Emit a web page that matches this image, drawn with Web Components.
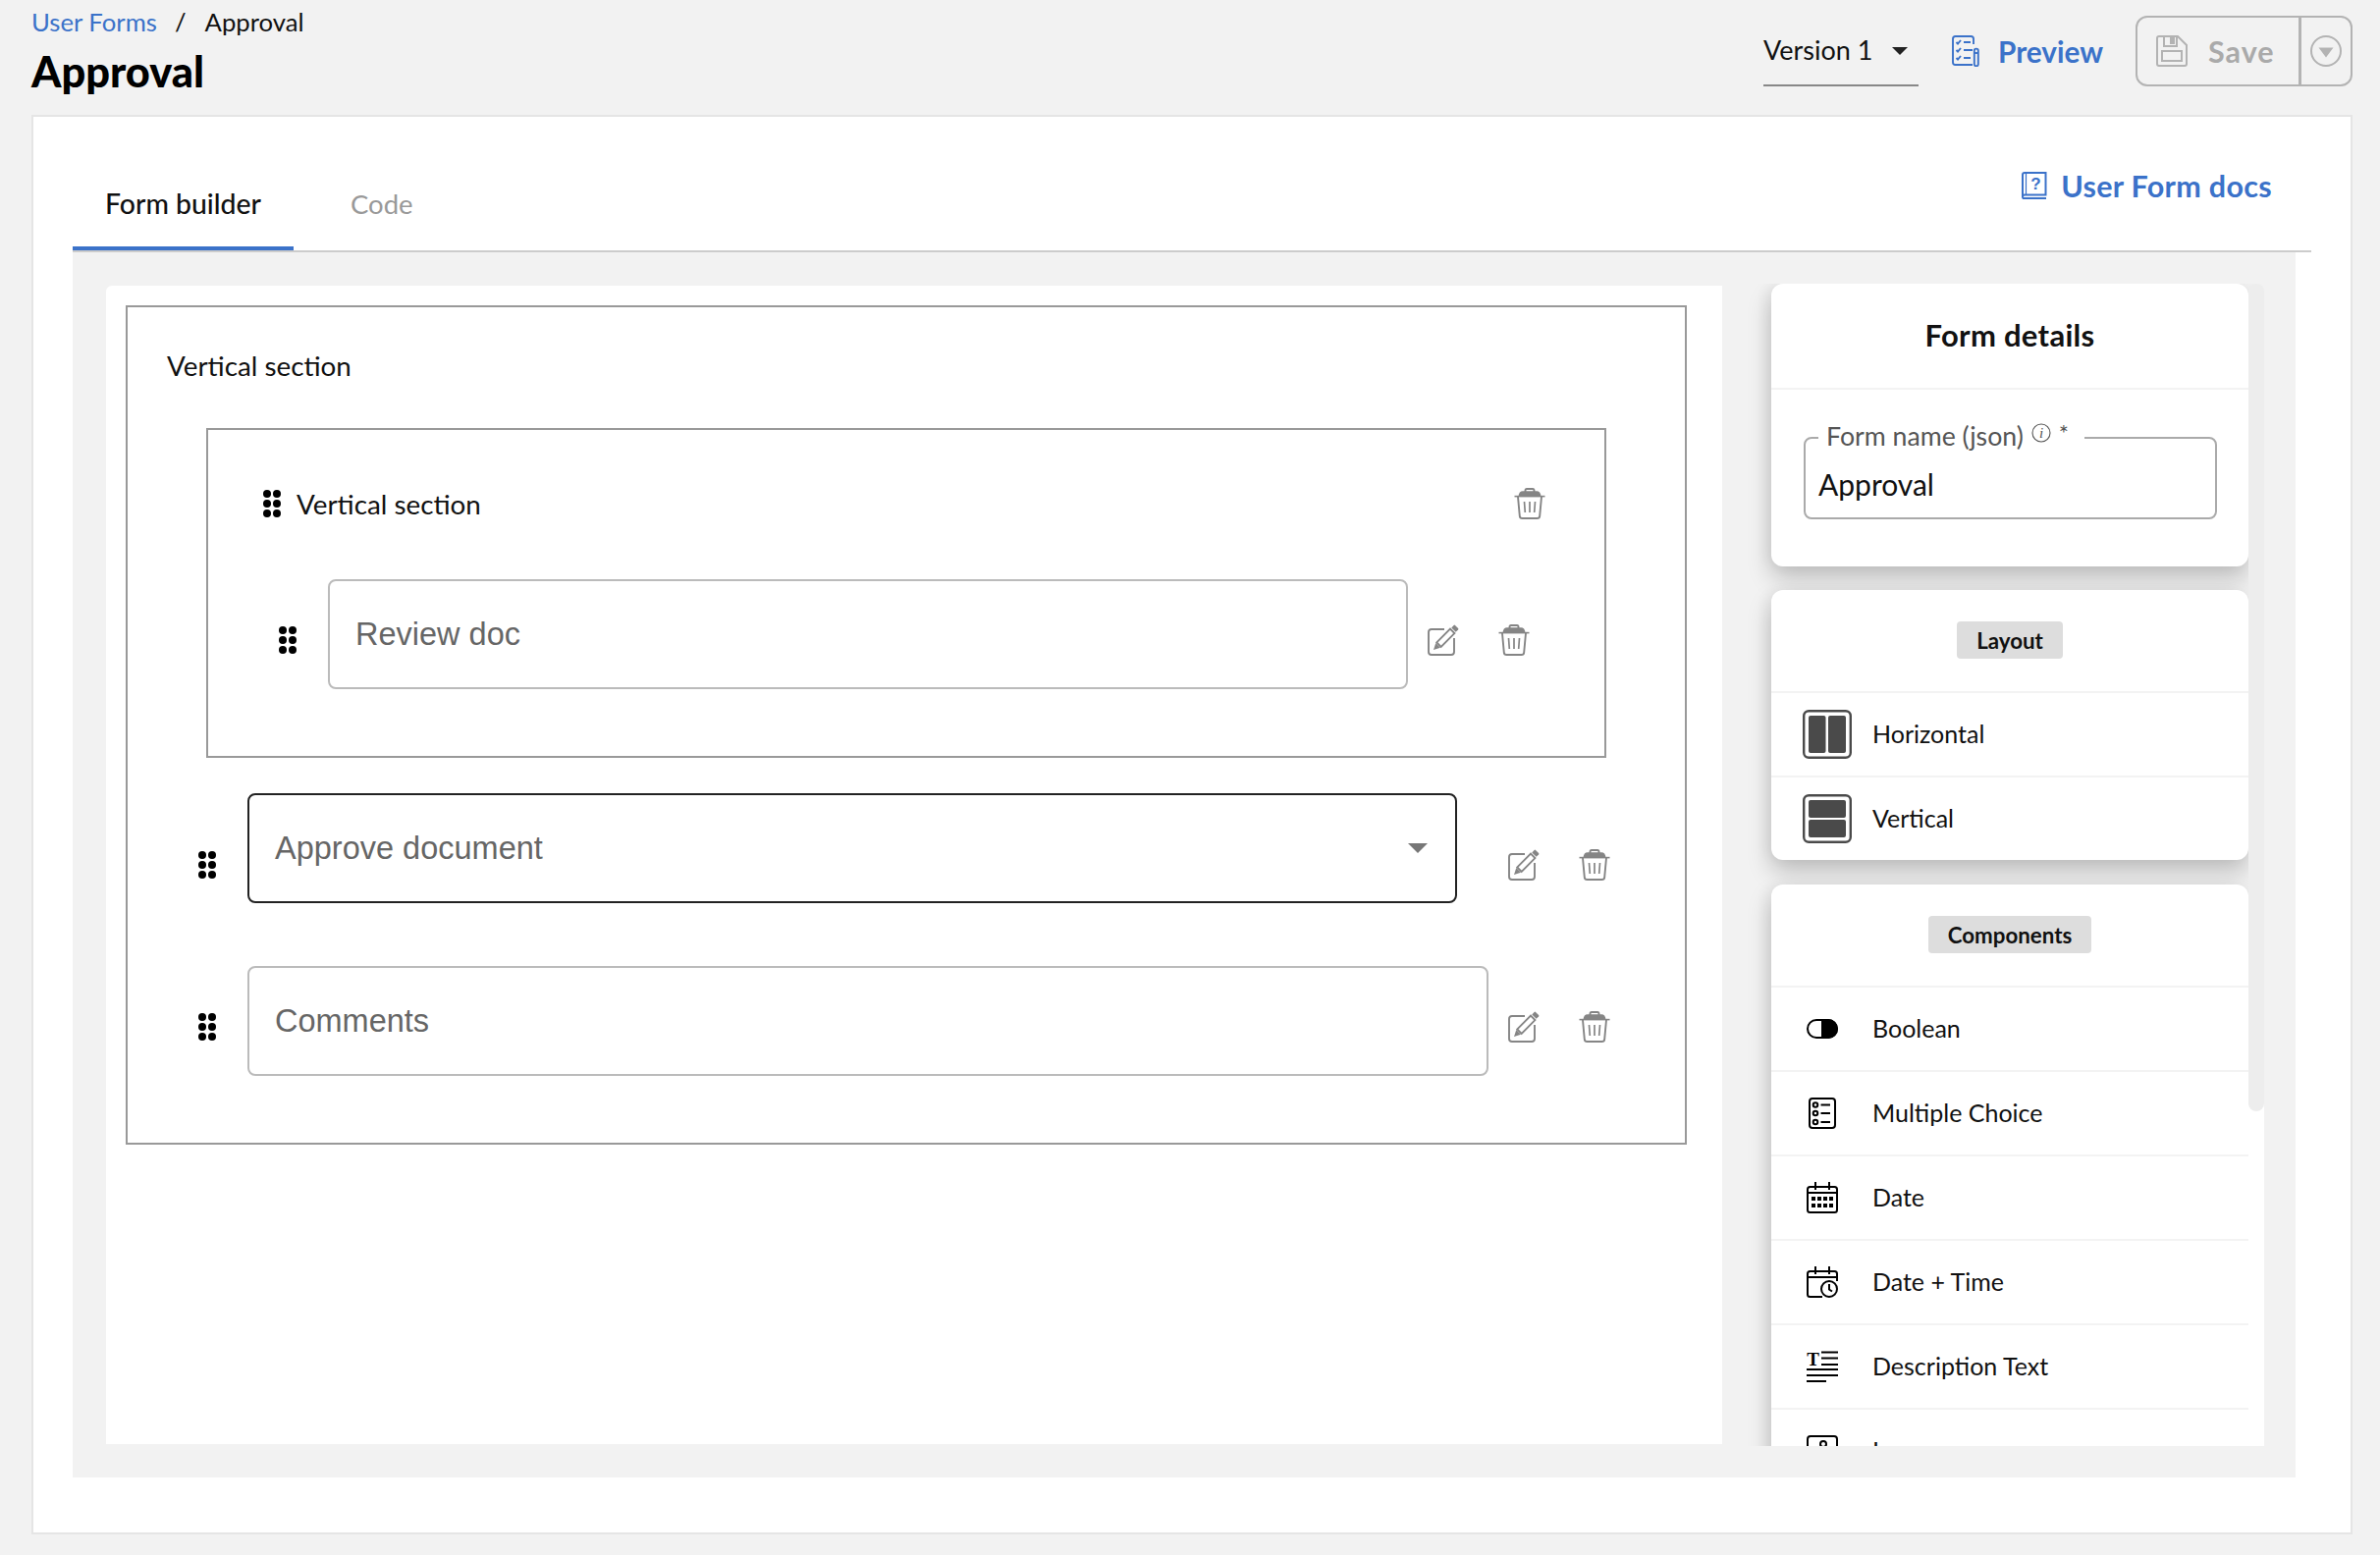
<!DOCTYPE html>
<html lang="en">
<head>
<meta charset="utf-8">
<title>Approval</title>
<style>
  html, body { margin: 0; padding: 0; }
  body {
    width: 2424px;
    height: 1584px;
    overflow: hidden;
    background: #f2f2f2;
    color: #000;
    font-family: Lato, "Open Sans", sans-serif;
  }
</style>
</head>
<body>
<form-page></form-page>

<script>
const ICONS = {
  drag: `<svg width="18" height="28" viewBox="0 0 18 28" fill="#000"><circle cx="4" cy="4" r="4"/><circle cx="14" cy="4" r="4"/><circle cx="4" cy="14" r="4"/><circle cx="14" cy="14" r="4"/><circle cx="4" cy="24" r="4"/><circle cx="14" cy="24" r="4"/></svg>`,
  trash: `<svg width="32" height="32" viewBox="0 0 32 32" fill="none" stroke="#858585" stroke-width="1.9"><path d="M11.5 4V2.6Q11.5 1 13 1H19Q20.500 1 20.500 2.6V4"/><path d="M4.500 8.500Q5 3.200 9 3.200H23Q27 3.200 27.500 8.500Z" fill="#858585" stroke="none"/><path d="M.5 8.600H31.500" stroke-width="1.6"/><path d="M4 9L5.800 28.600Q6 31 8.500 31H23.500Q26 31 26.200 28.600L28 9"/><path d="M10.500 14L11.300 25M16 14V25M21.500 14L20.700 25" stroke-width="1.7"/></svg>`,
  edit: `<svg width="32" height="32" viewBox="0 0 32 32" fill="none" stroke="#858585" stroke-width="1.9"><path d="M17 5H4Q1 5 1 8V28Q1 31 4 31H24Q27 31 27 28V14"/><path d="M6 26L8.300 19 13 23.700Z" fill="#858585" stroke="none"/><path d="M9.300 18.400L23 4.700 27.400 9.100 13.700 22.800Z"/><path d="M24.300 3.400L26.600.9Q27.300.3 28 .9L31.100 4Q31.700 4.700 31.100 5.400L28.700 7.800Z" fill="#858585" stroke="none"/></svg>`,
  preview: `<svg width="28" height="32" viewBox="0 0 28 32" fill="none" stroke="#3b72c9" stroke-width="1.9"><path d="M22 9V3.500Q22 1 19.500 1H3.500Q1 1 1 3.500V27.500Q1 30 3.500 30H21"/><path d="M4.500 7L6 8.600 9 5M4.500 15L6 16.600 9 13M4.500 23L6 24.600 9 21"/><path d="M12 7H19M12 15H21M12 23H19" stroke-width="2.2"/><path d="M22.800 15.500Q22.800 13.600 24.800 13.600T26.800 15.500V29.500Q26.800 31.300 24.800 31.300T22.800 29.500Z"/><path d="M22.800 18H26.800"/></svg>`,
  save: `<svg width="32" height="32" viewBox="0 0 32 32" fill="none" stroke="#b3b3b3" stroke-width="2"><path d="M1 3Q1 1 3 1H22L31 10V29Q31 31 29 31H3Q1 31 1 29Z"/><path d="M8 1V11H21V1"/><path d="M14 1H19V9H14Z" fill="#b3b3b3" stroke="none"/><path d="M6 16H26V26H6Z"/></svg>`,
  circleArrow: `<svg width="32" height="32" viewBox="0 0 32 32" fill="none" stroke="#b3b3b3" stroke-width="2"><circle cx="16" cy="16" r="15"/><path d="M8.500 12.500H23.500L16 22.500Z" fill="#b3b3b3" stroke="none"/></svg>`,
  docs: `<svg width="26" height="28" viewBox="0 0 26 28" fill="none" stroke="#3b72c9" stroke-width="2"><path d="M3 1H24.500V23.500H3Q1 23.500 1 25.500T3 27H25M1 25.500V3Q1 1 3 1"/><path d="M4.500 1V23" stroke-width="1.2"/><text x="14.500" y="18" text-anchor="middle" font-family="Liberation Sans" font-size="17" font-weight="700" fill="#3b72c9" stroke="none">?</text></svg>`,
  info: `<svg width="20" height="20" viewBox="0 0 20 20" fill="none" stroke="#555" stroke-width="1.1"><circle cx="10" cy="10" r="9"/><text x="10" y="15" text-anchor="middle" font-family="Liberation Serif" font-style="italic" font-size="15" fill="#555" stroke="none">i</text></svg>`,
  horizontal: `<svg width="50" height="50" viewBox="0 0 50 50" fill="#4a4a4a"><rect x="1.200" y="1.200" width="47.600" height="47.600" rx="5" fill="none" stroke="#4a4a4a" stroke-width="2.4"/><rect x="6" y="6" width="17.500" height="38" rx="2"/><rect x="26" y="6" width="18" height="38" rx="2"/></svg>`,
  vertical: `<svg width="50" height="50" viewBox="0 0 50 50" fill="#4a4a4a"><rect x="1.200" y="1.200" width="47.600" height="47.600" rx="5" fill="none" stroke="#4a4a4a" stroke-width="2.4"/><rect x="6" y="6" width="38" height="18" rx="2"/><rect x="6" y="26" width="38" height="18" rx="2"/></svg>`,
  boolean: `<svg width="32" height="20" viewBox="0 0 32 20" fill="none" stroke="#000" stroke-width="2"><rect x="1" y="1" width="30" height="18" rx="9"/><path d="M16 1H22A9 9 0 0 1 22 19H16Z" fill="#000"/></svg>`,
  choice: `<svg width="28" height="32" viewBox="0 0 28 32" fill="none" stroke="#000" stroke-width="2"><rect x="1" y="1" width="26" height="30" rx="3"/><circle cx="7" cy="7.500" r="2.300"/><circle cx="7" cy="16" r="2.300"/><circle cx="7" cy="25" r="2.300"/><path d="M12.500 7.500H22M12.500 16H22M12.500 25H22"/></svg>`,
  date: `<svg width="32" height="32" viewBox="0 0 32 32" fill="none" stroke="#000" stroke-width="2"><rect x="1" y="5" width="30" height="26" rx="2.500"/><path d="M1 11H31M9 0V8M23 0V8"/><g fill="#000" stroke="none"><rect x="5" y="15" width="4" height="4"/><rect x="11" y="15" width="4" height="4"/><rect x="17" y="15" width="4" height="4"/><rect x="23" y="15" width="4" height="4"/><rect x="5" y="22" width="4" height="4"/><rect x="11" y="22" width="4" height="4"/><rect x="17" y="22" width="4" height="4"/><rect x="23" y="22" width="4" height="4"/></g></svg>`,
  datetime: `<svg width="32" height="32" viewBox="0 0 32 32" fill="none" stroke="#000" stroke-width="2"><path d="M16 31H3.500Q1 31 1 28.500V7.500Q1 5 3.500 5H28.500Q31 5 31 7.500V15"/><path d="M1 11H31M9 0V8M23 0V8"/><circle cx="23" cy="23" r="8"/><path d="M23 18V23.500L26 25.500"/></svg>`,
  description: `<svg width="32" height="32" viewBox="0 0 32 32" fill="none" stroke="#000" stroke-width="2"><text x="6.500" y="15" text-anchor="middle" font-family="Liberation Serif" font-weight="700" font-size="19" fill="#000" stroke="none">T</text><path d="M15 1.500H32M15 7.500H32M15 14H32M0 19H32M0 25H32M0 31H20"/></svg>`,
  image: `<svg width="32" height="32" viewBox="0 0 32 32" fill="none" stroke="#000" stroke-width="2"><rect x="1" y="1" width="30" height="30" rx="3"/><circle cx="17" cy="9" r="3"/><path d="M5 26L12 17 18 23 22 19 27 26"/></svg>`
};

class FbIcon extends HTMLElement {
  constructor() {
    super();
    this.attachShadow({ mode: "open" });
  }
  connectedCallback() {
    this.shadowRoot.innerHTML = `
      <style>:host { display: inline-flex; flex: none; line-height: 0; } svg { display: block; }</style>
      ${ICONS[this.getAttribute("name")] || ""}`;
  }
}

class FormHeader extends HTMLElement {
  constructor() {
    super();
    this.attachShadow({ mode: "open" });
    this.shadowRoot.innerHTML = `
      <style>
        :host { display: flex; justify-content: space-between; height: 117px; padding: 0 28px 0 32px; box-sizing: border-box; }
        .crumbs { display: flex; height: 44px; align-items: center; font-size: 25.700px; color: #111; }
        .crumbs a { color: #3b72c9; }
        .crumbs i { font-style: normal; margin: 0 19px 0 18px; }
        h1 { margin: 2px 0 0; font-size: 43.400px; line-height: 52px; font-weight: 900; }
        .actions { display: flex; align-items: flex-start; padding-top: 16px; }
        .version { display: flex; align-items: center; width: 158px; height: 70px; padding-bottom: 2px; box-sizing: content-box; height: 68px; border-bottom: 2px solid #888; font-size: 27px; color: #111; }
        .version span { flex: 1; }
        .version b { width: 0; height: 0; margin: 3px 11px 0 0; border: 8px solid transparent; border-top-color: #222; border-bottom: 0; }
        .preview { display: flex; align-items: center; gap: 19px; height: 72px; margin: 0 33px 0 34px; color: #3b72c9; font-size: 29.700px; font-weight: 700; }
        .save { display: flex; width: 221px; height: 72px; box-sizing: border-box; border: 2px solid #b3b3b3; border-radius: 12px; color: #aaa; font-size: 30.500px; letter-spacing: 1px; font-weight: 700; }
        .save div { display: flex; align-items: center; }
        .main { width: 167px; gap: 21px; padding-left: 19px; box-sizing: border-box; border-right: 3px solid #b3b3b3; }
        .more { flex: 1; justify-content: center; }
      </style>
      <div>
        <div class="crumbs"><a>User Forms</a><i>/</i><span>Approval</span></div>
        <h1>Approval</h1>
      </div>
      <div class="actions">
        <div class="version"><span>Version 1</span><b></b></div>
        <div class="preview"><fb-icon name="preview"></fb-icon>Preview</div>
        <div class="save">
          <div class="main"><fb-icon name="save"></fb-icon>Save</div>
          <div class="more"><fb-icon name="circleArrow"></fb-icon></div>
        </div>
      </div>`;
  }
}

class FormTabs extends HTMLElement {
  constructor() {
    super();
    this.attachShadow({ mode: "open" });
    this.shadowRoot.innerHTML = `
      <style>
        :host { display: flex; height: 138px; margin: 0 40px; box-sizing: border-box; border-bottom: 2px solid #ccc; font-size: 27.500px; }
        .tab { align-self: flex-end; height: 92px; padding: 0 33px 4px; box-sizing: border-box; display: flex; align-items: center; color: #999; }
        .tab.on { color: #111; width: 225px; justify-content: center; padding: 0; border-bottom: 4px solid #3b72c9; margin-right: 25px; font-size: 28.400px; font-weight: 500; }
        .docs { margin: 50px 40px 0 auto; display: flex; align-items: center; gap: 14px; height: 40px; color: #3b72c9; font-size: 30.500px; letter-spacing: .3px; font-weight: 700; }
      </style>
      <div class="tab on">Form builder</div>
      <div class="tab">Code</div>
      <div class="docs"><fb-icon name="docs"></fb-icon>User Form docs</div>`;
  }
}

class FbSection extends HTMLElement {
  constructor() {
    super();
    this.attachShadow({ mode: "open" });
    this.shadowRoot.innerHTML = `
      <style>
        :host { display: block; box-sizing: border-box; border: 2px solid #999; font-size: 27.800px; color: #111; }
        .head { display: flex; align-items: center; }
        .head span { flex: 1; }
        :host([movable]) .head { height: 32px; margin: 59px 60px 61px 56px; gap: 16px; }
        :host(:not([movable])) .head { height: 40px; margin: 39px 0 44px 40px; }
        :host(:not([movable])) fb-icon { display: none; }
      </style>
      <div class="head"><fb-icon name="drag"></fb-icon><span><slot name="title"></slot></span><fb-icon name="trash"></fb-icon></div>
      <slot></slot>`;
  }
}

class FbRow extends HTMLElement {
  constructor() {
    super();
    this.attachShadow({ mode: "open" });
    this.shadowRoot.innerHTML = `
      <style>
        :host { display: flex; align-items: center; padding-left: 72px; font-family: "Liberation Sans", Arial, sans-serif; font-size: 32.500px; color: #666; }
        .box { display: flex; align-items: center; justify-content: space-between; flex: none; width: var(--w); height: 112px; margin: 0 var(--gap) 0 32px; padding: 0 40px 0 26px; box-sizing: border-box; border: 2px solid #bbb; border-radius: 8px; background: #fff; }
        :host([select]) .box { border-color: #222; border-width: 2.500px; }
        .caret { display: none; width: 0; height: 0; border: 10px solid transparent; border-top-color: #777; border-bottom: 0; margin-right: -11.500px; }
        :host([select]) .caret { display: block; }
        fb-icon { margin-top: var(--shift, 11px); }
        .trash { margin-left: 40px; }
      </style>
      <fb-icon name="drag"></fb-icon>
      <div class="box"><span><slot></slot></span><div class="caret"></div></div>
      <fb-icon name="edit"></fb-icon>
      <fb-icon class="trash" name="trash"></fb-icon>`;
  }
}

class FbPanel extends HTMLElement {
  constructor() {
    super();
    this.attachShadow({ mode: "open" });
    this.shadowRoot.innerHTML = `
      <style>
        :host { display: block; flex: none; border-radius: 12px; background: #fff; box-shadow: 0 12px 24px rgba(0,0,0,.22), -6px 0 12px rgba(0,0,0,.04); }
        .head { display: flex; justify-content: center; align-items: flex-start; height: 71px; padding-top: 32px; }
        :host([title-head]) .head { height: 106px; padding: 0 0 2px; align-items: center; box-sizing: border-box; font-size: 31px; letter-spacing: .3px; font-weight: 700; color: #111; }
        .chip { display: flex; align-items: center; height: 38px; padding: 0 20px; border-radius: 4px; background: #ddd; font-size: 22.300px; font-weight: 700; color: #111; }
        :host([title-head]) .chip { height: auto; padding: 0; background: none; font: inherit; }
      </style>
      <div class="head"><div class="chip"><slot name="title"></slot></div></div>
      <slot></slot>`;
  }
}

class FbPaletteItem extends HTMLElement {
  constructor() {
    super();
    this.attachShadow({ mode: "open" });
  }
  connectedCallback() {
    this.shadowRoot.innerHTML = `
      <style>
        :host { display: flex; align-items: center; height: 86px; box-sizing: border-box; padding: 0 0 2px 32px; border-top: 2px solid #f3f3f3; font-size: 25px; color: #111; }
        .ico { display: flex; justify-content: center; width: 32px; margin: 2px 35px 0 4px; flex: none; }
        :host([big]) .ico { width: 50px; margin: 2px 21px 0 0; }
      </style>
      <div class="ico"><fb-icon name="${this.getAttribute("icon")}"></fb-icon></div>
      <slot></slot>`;
  }
}

class FbTextInput extends HTMLElement {
  constructor() {
    super();
    this.attachShadow({ mode: "open" });
    this.shadowRoot.innerHTML = `
      <style>
        :host { display: block; position: relative; height: 84px; margin: 48px 32px 48px 33px; box-sizing: border-box; border: 2px solid #aaa; border-radius: 8px; font-size: 30px; color: #111; }
        .value { display: flex; align-items: center; height: 100%; padding: 11px 0 0 13px; box-sizing: border-box; }
        .legend { position: absolute; top: -19px; left: 13px; display: flex; align-items: flex-start; gap: 8px; height: 30px; padding: 0 16px 0 8px; background: #fff; font-size: 26.700px; color: #555; }
        .legend fb-icon { margin-top: 3px; }
        .legend small { font-size: 24px; line-height: 26px; }
      </style>
      <div class="legend">Form name (json) <fb-icon name="info"></fb-icon><small>*</small></div>
      <div class="value"><slot></slot></div>`;
  }
}

class FormPage extends HTMLElement {
  constructor() {
    super();
    this.attachShadow({ mode: "open" });
    this.shadowRoot.innerHTML = `
      <style>
        :host { display: block; }
        .card { width: 2364px; height: 1446px; margin-left: 32px; box-sizing: border-box; border: 2px solid #e5e5e5; background: #fff; }
        .work { display: flex; align-items: flex-start; width: 2264px; height: 1248px; margin-left: 40px; padding: 34px 0 34px 34px; box-sizing: border-box; background: #f2f2f2; }
        .canvas { flex: none; width: 1646px; height: 1180px; padding: 20px 0 0 20px; box-sizing: border-box; background: #fff; border-top-left-radius: 6px; }
        .outer { width: 1590px; height: 855px; }
        .inner { display: block; width: 1426px; height: 336px; margin: 0 0 36px 80px; }
        .tight { margin-top: 64px; }
        .side { display: flex; flex: none; width: 502px; height: 1184px; margin: -2px 0 0 50px; clip-path: inset(0 0 0 -40px); }
        .panels { display: flex; flex-direction: column; width: 486px; }
        .panels fb-panel + fb-panel { margin-top: 24px; }
        .panels fb-panel + fb-panel + fb-panel { margin-top: 25px; }
        .track { width: 16px; background: linear-gradient(transparent 100px, #fff 100px); }
        .thumb { height: 843px; background: #ededed; border-radius: 10px; }
      </style>
      <form-header></form-header>
      <div class="card">
        <form-tabs></form-tabs>
        <div class="work">
          <div class="canvas">
            <fb-section class="outer">
              <span slot="title">Vertical section</span>
              <fb-section class="inner" movable>
                <span slot="title">Vertical section</span>
                <fb-row style="--w:1100px;--gap:20px">Review doc</fb-row>
              </fb-section>
              <fb-row select style="--w:1232px;--gap:52px;--shift:33px">Approve document</fb-row>
              <fb-row class="tight" style="--w:1264px;--gap:20px">Comments</fb-row>
            </fb-section>
          </div>
          <div class="side">
            <div class="panels">
              <fb-panel title-head>
                <span slot="title">Form details</span>
                <div style="border-top:2px solid #f3f3f3;display:flow-root"><fb-text-input>Approval</fb-text-input></div>
              </fb-panel>
              <fb-panel>
                <span slot="title">Layout</span>
                <fb-palette-item big icon="horizontal">Horizontal</fb-palette-item>
                <fb-palette-item big icon="vertical">Vertical</fb-palette-item>
              </fb-panel>
              <fb-panel>
                <span slot="title">Components</span>
                <fb-palette-item icon="boolean">Boolean</fb-palette-item>
                <fb-palette-item icon="choice">Multiple Choice</fb-palette-item>
                <fb-palette-item icon="date">Date</fb-palette-item>
                <fb-palette-item icon="datetime">Date + Time</fb-palette-item>
                <fb-palette-item icon="description">Description Text</fb-palette-item>
                <fb-palette-item icon="image">Image</fb-palette-item>
              </fb-panel>
            </div>
            <div class="track"><div class="thumb"></div></div>
          </div>
        </div>
      </div>`;
  }
}

customElements.define("fb-icon", FbIcon);
customElements.define("form-header", FormHeader);
customElements.define("form-tabs", FormTabs);
customElements.define("fb-section", FbSection);
customElements.define("fb-row", FbRow);
customElements.define("fb-panel", FbPanel);
customElements.define("fb-palette-item", FbPaletteItem);
customElements.define("fb-text-input", FbTextInput);
customElements.define("form-page", FormPage);
</script>
</body>
</html>
